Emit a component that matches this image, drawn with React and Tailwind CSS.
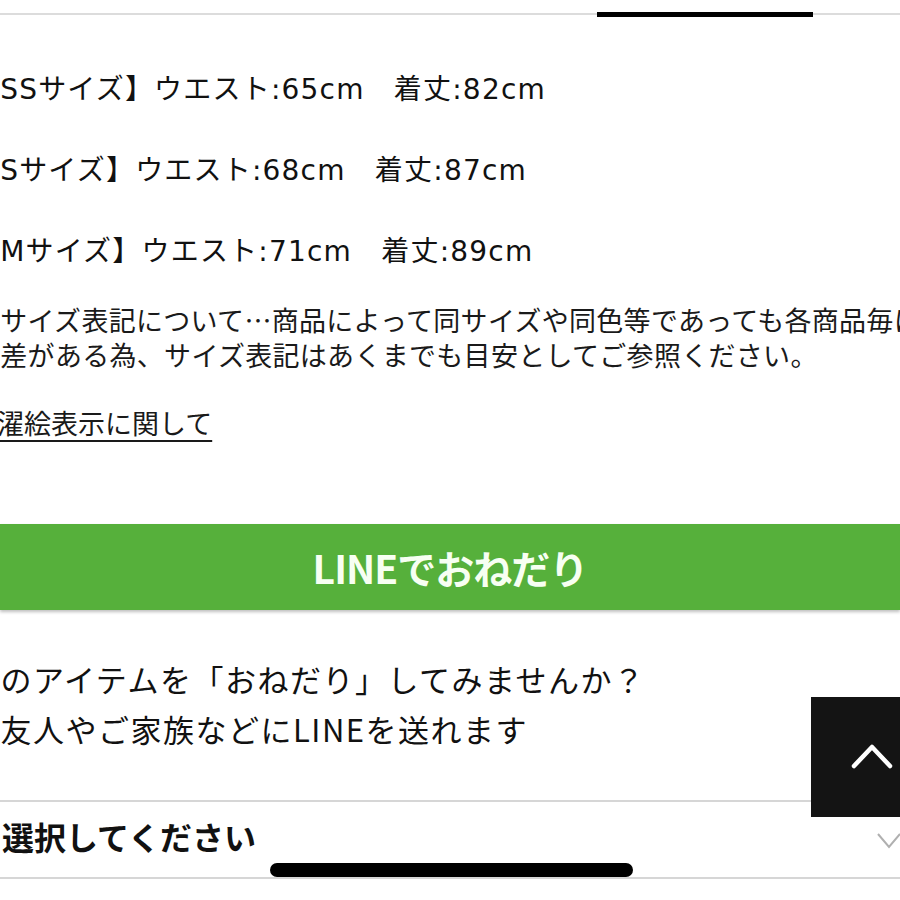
import React from 'react';

const jp = { fontFamily: '"Noto Sans CJK JP", "Noto Sans", sans-serif' };
const mixed = { fontFamily: '"DejaVu Sans", "Noto Sans CJK JP", sans-serif' };

const sizes = [
  '【SSサイズ】ウエスト:65cm　着丈:82cm',
  '【Sサイズ】ウエスト:68cm　着丈:87cm',
  '【Mサイズ】ウエスト:71cm　着丈:89cm',
];

const App = () => {
  return (
    <div className="relative w-[900px] h-[900px] overflow-hidden bg-white text-[#111]" style={jp}>
      {/* top tab line */}
      <div className="relative h-[49px]">
        <div className="absolute left-0 right-0 top-[13px] h-[2px] bg-[#dcdcdc]" />
        <div className="absolute left-[597px] w-[216px] top-[12px] h-[5px] bg-black" />
      </div>

      {/* size list */}
      <div>
        {sizes.map((s) => (
          <div key={s} className="h-[81px] flex items-center">
            <span className="-ml-[29px] whitespace-nowrap text-[28px] tracking-[1.2px] leading-none" style={mixed}>
              {s}
            </span>
          </div>
        ))}
      </div>

      {/* note */}
      <div className="mt-[10px] text-[27px] tracking-[0.3px] leading-[35px] text-[#1a1a1a]">
        <div className="-ml-[27px] whitespace-nowrap">※サイズ表記について…商品によって同サイズや同色等であっても各商品毎に</div>
        <div className="-ml-[27px] whitespace-nowrap">誤差がある為、サイズ表記はあくまでも目安としてご参照ください。</div>
      </div>

      <div className="mt-[33px] text-[27px] leading-[35px] text-[#1a1a1a]">
        <span className="-ml-[30px] inline-block whitespace-nowrap underline underline-offset-[6px] decoration-[2px]">洗濯絵表示に関して</span>
      </div>

      {/* LINE button */}
      <div className="mt-[84px] h-[86px] bg-[#56b03b] shadow-[0_2px_3px_rgba(0,0,0,0.25)] flex items-center justify-center">
        <span className="text-[39px] font-semibold text-[#f7fff2] tracking-tight">LINEでおねだり</span>
      </div>

      {/* ask */}
      <div className="mt-[44px] text-[31px] tracking-[1.5px] leading-[50px]">
        <div className="-ml-[32px] whitespace-nowrap">このアイテムを「おねだり」してみませんか？</div>
        <div className="-ml-[32px] whitespace-nowrap">ご友人やご家族などにLINEを送れます</div>
      </div>

      {/* select */}
      <div className="mt-[46px] border-t-2 border-b-2 border-[#d6d6d6] h-[79px] flex items-center justify-between">
        <span className="pl-[2px] -mt-[8px] text-[32px] font-bold">選択してください</span>
        <svg width="30" height="20" viewBox="0 0 30 20" className="-mr-[6px] mt-[2px]">
          <polyline points="2,3 13,16 24,3" fill="none" stroke="#b0b0b0" strokeWidth="2" />
        </svg>
      </div>

      {/* scroll to top button */}
      <div className="absolute left-[811px] top-[697px] w-[89px] h-[120px] bg-[#141414]">
        <svg width="44" height="30" viewBox="0 0 44 30" className="absolute left-[40px] top-[44px]">
          <polyline points="3,25 21,6 39,25" fill="none" stroke="white" strokeWidth="4.5" strokeLinecap="round" strokeLinejoin="round" />
        </svg>
      </div>

      {/* home indicator */}
      <div className="absolute left-[270px] top-[863px] w-[363px] h-[14px] rounded-full bg-black" />
    </div>
  );
};

export default App;
